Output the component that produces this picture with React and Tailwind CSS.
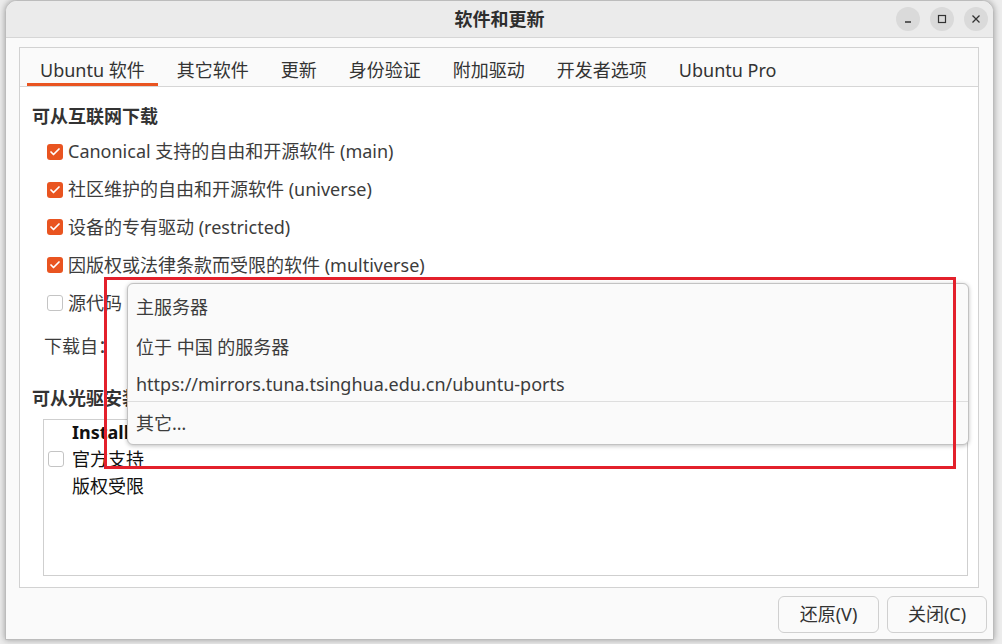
import { Check } from "lucide-react";

const font = { fontFamily: '"Noto Sans", "Noto Sans CJK SC", sans-serif' };

function Box({ checked }) {
  return checked ? (
    <span className="w-[16px] h-[16px] rounded-[3px] bg-[#e95420] flex items-center justify-center shrink-0">
      <Check className="w-[12px] h-[12px] text-white" strokeWidth={3.5} />
    </span>
  ) : (
    <span className="w-[16px] h-[16px] rounded-[3px] bg-white border border-[#c4c4c4] shrink-0" />
  );
}

function Row({ checked, children }) {
  return (
    <div className="h-[37.8px] flex items-center gap-[5px] pl-[15px]">
      <Box checked={checked} />
      <span>{children}</span>
    </div>
  );
}

const tabs = ["Ubuntu 软件", "其它软件", "更新", "身份验证", "附加驱动", "开发者选项", "Ubuntu Pro"];

export default function App() {
  return (
    <div className="relative w-[1002px] h-[644px] bg-[#ececec] overflow-hidden text-[#3c3c3c] text-[18px]" style={font}>
      <div className="ml-[5px] w-[989px] h-[640px] rounded-t-[12px] bg-[#fafafa] border border-[#bcbcbc] shadow-[0_0_6px_rgba(0,0,0,0.35)] flex flex-col overflow-hidden">
        {/* title bar */}
        <div className="h-[37px] shrink-0 bg-[#ebebeb] border-b border-[#d6d6d6] flex items-center relative">
          <div className="flex-1 text-center font-bold text-[18px] text-[#2e2e2e]">软件和更新</div>
          <div className="absolute right-[5px] top-[6px] flex gap-[10px]">
            <span className="w-[24px] h-[24px] rounded-full bg-[#dadada] flex items-center justify-center">
              <svg width="10" height="10" viewBox="0 0 10 10"><path d="M2 8h6" stroke="#333" strokeWidth="1.3" /></svg>
            </span>
            <span className="w-[24px] h-[24px] rounded-full bg-[#dadada] flex items-center justify-center">
              <svg width="10" height="10" viewBox="0 0 10 10"><rect x="1.5" y="1.5" width="7" height="7" fill="none" stroke="#333" strokeWidth="1.2" /></svg>
            </span>
            <span className="w-[24px] h-[24px] rounded-full bg-[#dadada] flex items-center justify-center">
              <svg width="10" height="10" viewBox="0 0 10 10"><path d="M1.5 1.5l7 7M8.5 1.5l-7 7" stroke="#333" strokeWidth="1.3" /></svg>
            </span>
          </div>
        </div>

        {/* body */}
        <div className="flex-1 flex flex-col pl-[13px] pr-[14px] pt-[9px]">
          <div className="h-[541px] border border-[#d2d2d2] flex flex-col">
            <div className="h-[38px] flex items-end pl-[7px] gap-[6px]">
              {tabs.map((t, i) => (
                <div
                  key={t}
                  className={
                    i === 0
                      ? "h-full px-[13px] flex items-center border-b-[3px] border-[#e95420] pt-[9px] text-[#333]"
                      : "h-full px-[13px] flex items-center pt-[6px] text-[#333]"
                  }
                >
                  {t}
                </div>
              ))}
            </div>
            <div className="flex-1 bg-white border-t border-[#d6d6d6] pl-[12px] pr-[10px] pt-[16px] flex flex-col">
              <div className="font-bold text-[#333] h-[26px] flex items-center">可从互联网下载</div>
              <div className="mt-[4px]">
                <Row checked>Canonical 支持的自由和开源软件 (main)</Row>
                <Row checked>社区维护的自由和开源软件 (universe)</Row>
                <Row checked>设备的专有驱动 (restricted)</Row>
                <Row checked>因版权或法律条款而受限的软件 (multiverse)</Row>
                <Row checked={false}>源代码</Row>
              </div>
              <div className="h-[50px] flex items-center pl-[12px]">下载自：</div>
              <div className="font-bold text-[#333] h-[26px] flex items-center mt-[14px]">可从光驱安装</div>
              <div className="mt-[7px] ml-[11px] h-[157px] border border-[#cfcfcf] bg-white">
                <div className="pl-[28px] h-[26px] flex items-center font-bold text-[#111]">Installation medium</div>
                <div className="flex items-center gap-[8px] pl-[4px] h-[27px]">
                  <Box checked={false} />
                  <span className="text-[#111]">官方支持</span>
                </div>
                <div className="pl-[28px] h-[28px] flex items-center text-[#111]">版权受限</div>
              </div>
            </div>
          </div>
          <div className="flex justify-end gap-[8px] mt-[8px] mr-[-8px]">
            <button className="w-[101px] h-[37px] rounded-[6px] border border-[#d0d0d0] bg-[#fafafa] text-[#333]">还原(V)</button>
            <button className="w-[100px] h-[37px] rounded-[6px] border border-[#d0d0d0] bg-[#fafafa] text-[#333]">关闭(C)</button>
          </div>
        </div>
      </div>

      {/* popover menu */}
      <div className="absolute left-[127px] top-[283px] w-[842px] h-[162px] rounded-[6px] border border-[#c2c2c2] bg-[#fafafa] shadow-[0_1px_4px_rgba(0,0,0,0.25)] pt-[3px] text-[#3c3c3c]">
        <div className="h-[40px] flex items-center pl-[8px]">主服务器</div>
        <div className="h-[40px] flex items-center pl-[8px]">位于 中国 的服务器</div>
        <div className="h-[34px] flex items-center pl-[8px]">https://mirrors.tuna.tsinghua.edu.cn/ubuntu-ports</div>
        <div className="h-px bg-[#dedede]" />
        <div className="h-[42px] flex items-center pl-[8px]">其它…</div>
      </div>

      {/* red highlight */}
      <div className="absolute left-[104px] top-[277px] w-[852px] h-[192px] border-[3px] border-[#e3202b]" />
    </div>
  );
}
